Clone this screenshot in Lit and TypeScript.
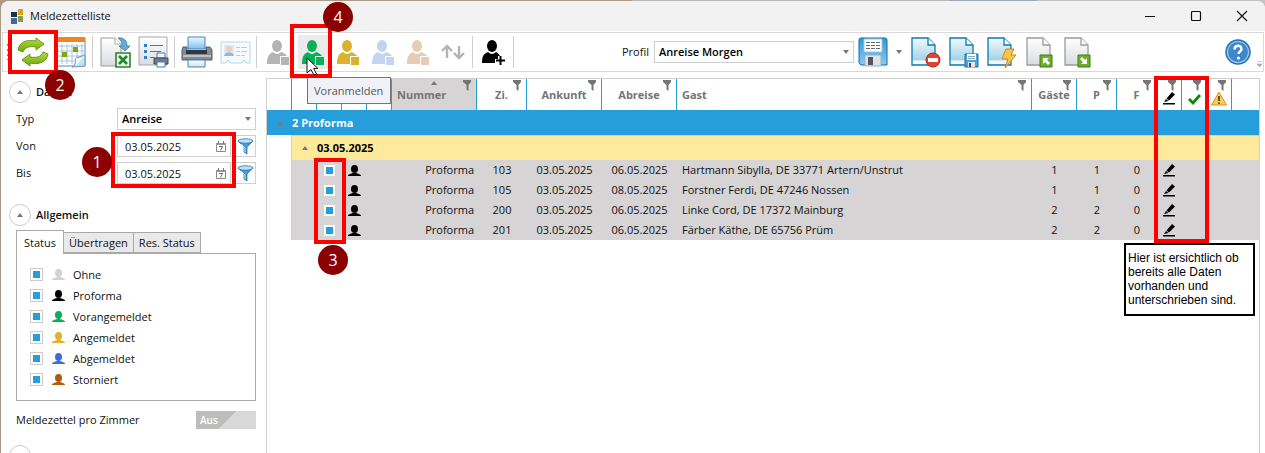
import { LitElement, html, css, svg, nothing } from "lit";
import { customElement, property, state } from "lit/decorators.js";
import { classMap } from "lit/directives/class-map.js";

const shapes: Record<string, unknown> = {
  logo: svg`<path d="M0 3h6v5H0z" fill="#17324f"/><path d="M7 0h5v6H7z" fill="#dca21c"/><path d="M0 9h6v6H0z" fill="#45698c"/><path d="M7 7h5v6H7z" fill="#8a9b4e"/>`,
  min: svg`<path d="M1 6.500h10" stroke="#111"/>`,
  max: svg`<rect x="1.500" y="1.500" width="9" height="9" rx="1" fill="none" stroke="#111" stroke-width="1.200"/>`,
  close: svg`<path d="M1 1l10 10M11 1L1 11" stroke="#111" stroke-width="1.200"/>`,
  refresh: svg`<g fill="url(#grn)" stroke="#4b8a0c" stroke-width=".8" stroke-linejoin="round"><path d="M1 13C2 5 10 2 19 4V1l8 6-8 6v-3c-7-1-11 0-13 5z"/><path d="M31 17c-1 8-9 11-18 9v3l-8-6 8-6v3c7 1 11 0 13-5z"/></g>`,
  calendar: svg`<path d="M1 2h28v28H1z" fill="#fff" stroke="#5e88b4"/><path d="M0 1h29v5H0z" fill="#f08322"/><path d="M2 10h26M2 15h26M2 20h26M2 25h20M6 8v20M11 8v20M16 8v20M21 8v20M26 8v14" stroke="#aec3da"/><path d="M6 16h5v5H6zM17 11h5v5h-5z" fill="#79a710"/><path d="M16 31c4-2 3-6 4-9l9-3v11z" fill="#c6e0f4" stroke="#6a99c4"/><path d="M20 22c3 1 6 0 9-3l-9 11z" fill="#f5fbff"/>`,
  excel: svg`<path d="M1 1h14l6 6v22H1z" fill="url(#paper)" stroke="#999"/><path d="M15 1v6h6" fill="#fff" stroke="#aaa"/><path d="M18 1c6-1 9 3 9 8h3l-5 5-6-5h3c0-4-1-6-4-8z" fill="#68a9dc" stroke="#2c6da4" stroke-width=".7"/><path d="M16 16h14v14H16z" fill="#e9f5e6" stroke="#2f8132" stroke-width="1.600"/><path d="M19 19l8 8M27 19l-8 8" stroke="#23862b" stroke-width="2.600"/>`,
  listprint: svg`<path d="M1 1h28v28H1z" fill="url(#paper)" stroke="#a6a6a6"/><path d="M6 8h3v3H6zM6 14h3v3H6zM6 20h3v3H6z" fill="#2f7fd0"/><path d="M12 9.500h13M12 15.500h11M12 21.500h4" stroke="#707070"/><path d="M19 17h8v5h-8z" fill="#eef7ff" stroke="#3e7ebc"/><path d="M16 22h14v6H16z" fill="#747b83" stroke="#41474d"/><path d="M19 26h8v5h-8z" fill="#fff" stroke="#3e7ebc"/>`,
  printer: svg`<path d="M7 1h17v12H7z" fill="url(#blue)" stroke="#4187c3"/><path d="M2 11h4v5h19v-5h4l2 3v10H1V14z" fill="#858b92" stroke="#545a61"/><path d="M5 14h21v4H5z" fill="#33383e"/><path d="M2 20h28" stroke="#bcc1c6" stroke-width="2"/><path d="M7 24h17v7H7z" fill="url(#paper)" stroke="#4187c3"/>`,
  idcard: svg`<g opacity=".5"><path d="M1 4h29v21h-4l-2-3-2 3H10l-2-3-2 3H1z" fill="#edf7fc" stroke="#69b4d9"/><path d="M4 7h10v11H4z" fill="#b7d7f0"/><circle cx="9" cy="11" r="3" fill="#dda05a"/><path d="M4 18c1-5 9-5 10 0z" fill="#2e72b5"/><path d="M16 9.500h4M21 9.500h6M16 13.500h4M21 13.500h6M16 17.500h4M21 17.500h4" stroke="#6ba4c8"/></g>`,
  person: svg`<ellipse cx="10" cy="6" rx="5" ry="6" fill="currentColor"/><path d="M0 24c0-8 2-10 6-12q4 4 8 0c3 1 5 2 6 4h-7v8z" fill="currentColor"/><path d="M14 17h8v8h-8z" fill="currentColor"/>`,
  personadd: svg`<ellipse cx="10" cy="6" rx="5" ry="6" fill="currentColor"/><path d="M0 23c0-8 2-9 6-11q4 4 8 0c2 1 3 2 4 4h-2v3h-3v4z" fill="currentColor"/><path d="M14 20.500h9M18.500 16v9" stroke="currentColor" stroke-width="2"/>`,
  updown: svg`<path d="M6 14V3M1 7l5-5 5 5M18 2v11M13 9l5 5 5-5" fill="none" stroke="#b4b4b4" stroke-width="2.400"/>`,
  save: svg`<path d="M1 3q0-2 2-2h24q2 0 2 2v25H3l-2-2z" fill="url(#disk)" stroke="#0b6fac"/><path d="M6 2h18v13H6z" fill="#fff" stroke="#9ec9e4"/><path d="M8 5.500h14M8 8.500h14M8 11.500h14" stroke="#5f6d7b" stroke-dasharray="4 1"/><path d="M7 18h16v11H7z" fill="#dce3ea" stroke="#8fb4ce"/><path d="M10 20h5v8h-5z" fill="#555"/>`,
  docdel: svg`${docShape("#0c78b0", "url(#doc)")}<circle cx="22" cy="23" r="7" fill="#e0442f" stroke="#b32416"/><path d="M17 21h10v4H17z" fill="#fff"/>`,
  docsave: svg`${docShape("#0c78b0", "url(#doc)")}<path d="M16 17h13v13H16z" fill="#4ba3dc" stroke="#176ea9"/><path d="M18 17h9v6h-9z" fill="#fff"/><path d="M19 19.500h7M19 21.500h7" stroke="#8ab"/><path d="M19 25h7v5h-7z" fill="#dfe7ee"/><path d="M20 26h2v4h-2z" fill="#444"/>`,
  docflash: svg`${docShape("#0c78b0", "url(#doc)")}<path d="M19 12h8l-3 6h5L18 31l3-9h-6z" fill="#fbc545" stroke="#cf821c"/>`,
  docup: svg`${docShape("#9b9b9b", "url(#paper)")}<path d="M14 18h12v12H14z" fill="#6fae2c" stroke="#3f7d13"/><path d="M17 21h6l-2 2 3 3-2 2-3-3-2 2z" fill="#fff"/>`,
  docdown: svg`${docShape("#9b9b9b", "url(#paper)")}<path d="M14 18h12v12H14z" fill="#6fae2c" stroke="#3f7d13"/><path d="M23 27h-6l2-2-3-3 2-2 3 3 2-2z" fill="#fff"/>`,
  help: svg`<circle cx="13" cy="13" r="12" fill="url(#disk)" stroke="#2f6fb4" stroke-width="1.500"/><circle cx="13" cy="13" r="10.500" fill="#3f87cd" stroke="#a9cdf0"/><path d="M9.500 10.500c0-5 7-5 7-.5 0 2.500-3 2.500-3 5" fill="none" stroke="#fff" stroke-width="2.400"/><circle cx="13.500" cy="19" r="1.600" fill="#fff"/>`,
  bust: svg`<ellipse cx="6.500" cy="4" rx="3.500" ry="4" fill="currentColor"/><path d="M0 11c0-2 3-2 5-3h3c2 1 5 1 5 3z" fill="currentColor"/>`,
  filter: svg`<path d="M0 0h8v2L5.500 5v6l-2-1.500V5L0 2z" fill="#757575"/>`,
  funnel: svg`<path d="M1 3l6 6v5l3 2V9l6-6z" fill="#4a9ad6" stroke="#2871ad" stroke-width=".8"/><ellipse cx="8.500" cy="3" rx="7.500" ry="2.200" fill="#bfe2f7" stroke="#2871ad" stroke-width=".8"/><path d="M4 6l4 4v4" fill="none" stroke="#bfe2f7"/>`,
  day: svg`<path d="M.5 2.500h9v8h-9z" fill="#fff" stroke="#888"/><path d="M0 2h10v2H0z" fill="#999"/><path d="M2.500 0v3M7.500 0v3" stroke="#777"/><path d="M3 5.500h3.500l-2 4" fill="none" stroke="#666"/>`,
  pen: svg`<path d="M0 11h12v1.600H0z" fill="#000"/><path d="M9 0l3 2.500-6 6L3.500 6.500zM3 7l2.500 2L1 10z" fill="#000"/>`,
  check: svg`<path d="M1 6l4 4 7-8" fill="none" stroke="#0a8a0a" stroke-width="2.800"/>`,
  warn: svg`<path d="M8 1l7.500 13H.5z" fill="#fccb57" stroke="#d99325" stroke-linejoin="round"/><path d="M8 5v5M8 11.500v1.500" stroke="#333" stroke-width="1.600"/>`,
  up: svg`<path d="M3 0l3 4H0z" fill="currentColor"/>`,
  down: svg`<path d="M0 0h6L3 4z" fill="#777"/>`,
  overflow: svg`<path d="M0 .5h5M0 3h5L2.500 6z" fill="#aaa" stroke="#aaa" stroke-width=".6"/>`,
  cursor: svg`<path d="M1 1v15l4-3.500L8 18l2.500-1-2.800-5.500H12z" fill="#fff" stroke="#111"/>`,
};

function docShape(line: string, fill: string) {
  return svg`<path d="M1 1h16l7 7v20H1z" fill=${fill} stroke=${line} stroke-width="1.300"/><path d="M17 1v7h7" fill="#fff" stroke=${line} stroke-width="1.300"/>`;
}

const gradients = svg`<defs>
  <linearGradient id="grn" x2="0" y2="1"><stop stop-color="#bddc37"/><stop offset="1" stop-color="#6da714"/></linearGradient>
  <linearGradient id="paper" x2="0" y2="1"><stop stop-color="#fff"/><stop offset="1" stop-color="#d9dcdf"/></linearGradient>
  <linearGradient id="blue" x2="0" y2="1"><stop stop-color="#eef8ff"/><stop offset="1" stop-color="#7fbfec"/></linearGradient>
  <linearGradient id="doc" x2="0" y2="1"><stop stop-color="#f3fafd"/><stop offset=".8" stop-color="#a5d3e6"/><stop offset=".85" stop-color="#f0f6fa"/></linearGradient>
  <linearGradient id="disk" x2="0" y2="1"><stop stop-color="#2e9ada"/><stop offset="1" stop-color="#8cc8ee"/></linearGradient>
</defs>`;

function icon(name: string, w: number, h: number) {
  return html`<svg width=${w} height=${h} viewBox="0 0 ${w} ${h}" aria-hidden="true">${gradients}${shapes[name]}</svg>`;
}

@customElement("tool-button")
export class ToolButton extends LitElement {
  @property() icon = "";
  @property() label = "";
  @property({ type: Number }) w = 32;
  @property({ type: Number }) h = 32;
  @property({ type: Boolean, reflect: true }) active = false;

  static styles = css`
    :host { display: flex; flex: none; width: 38px; height: 34px; justify-content: center; }
    button {
      display: flex; align-items: center; justify-content: center;
      width: 100%; padding: 0; border: 0; background: none; color: inherit;
    }
    :host([active]) button { background: #ebebeb; width: 30px; }
    svg { display: block; flex: none; }
  `;

  render() {
    return html`<button aria-label=${this.label}>${icon(this.icon, this.w, this.h)}</button>`;
  }
}

interface Guest { room: string; from: string; to: string; name: string; guests: number; p: number; f: number; }

@customElement("app-root")
export class AppRoot extends LitElement {
  @state() private guests: Guest[] = [
    { room: "103", from: "03.05.2025", to: "06.05.2025", name: "Hartmann Sibylla, DE 33771 Artern/Unstrut", guests: 1, p: 1, f: 0 },
    { room: "105", from: "03.05.2025", to: "08.05.2025", name: "Forstner Ferdi, DE 47246 Nossen", guests: 1, p: 1, f: 0 },
    { room: "200", from: "03.05.2025", to: "06.05.2025", name: "Linke Cord, DE 17372 Mainburg", guests: 2, p: 2, f: 0 },
    { room: "201", from: "03.05.2025", to: "06.05.2025", name: "Färber Käthe, DE 65756 Prüm", guests: 2, p: 2, f: 0 },
  ];

  private statuses = [
    ["Ohne", "none"], ["Proforma", "proforma"], ["Vorangemeldet", "pre"],
    ["Angemeldet", "in"], ["Abgemeldet", "out"], ["Storniert", "cancelled"],
  ];

  static styles = css`
    :host {
      display: block; height: 100vh; overflow: hidden; position: relative;
      box-sizing: border-box; padding: 1px 0 0 1px;
      background: linear-gradient(90deg, #a89a83 0 50%, #b9b9bb 50% 75%, #a0a8ba 75% 82%, #c4c4c4 82%);
      font: 11px/16px "Open Sans", "Noto Sans", sans-serif; color: #111;
    }
    *, *::before, *::after { box-sizing: border-box; }
    button, input, select { font: inherit; color: inherit; margin: 0; border-radius: 0; }
    button { padding: 0; border: 0; background: none; }
    svg { display: block; flex: none; }
    .window { height: 100%; display: flex; flex-direction: column; background: #fff; border-radius: 8px 8px 0 0; overflow: hidden; }
    .title { flex: none; height: 30px; display: flex; align-items: center; background: #f2f2f2; padding: 0 7px 0 10px; gap: 7px; }
    .title h1 { margin: 0; font: inherit; flex: 1; }
    .title button { width: 32px; height: 28px; margin-left: 7px; display: flex; align-items: center; justify-content: center; }

    .toolbar { flex: none; height: 40px; margin: 1px 1px 0; border: 1px solid #d9d9d9; display: flex; align-items: center; padding-left: 4px; }
    .grip { width: 2px; height: 16px; margin-right: 5px; background: repeating-linear-gradient(#888 0 2px, transparent 2px 5px); }
    .sep { flex: none; width: 1px; height: 32px; margin: 0 3px 0 2px; background: #cfcfcf; }
    .status { width: 35px; }
    .idle { color: #b4b4b4; } .pale-blue { color: #c5d3f3; } .pale-tan { color: #e6ccb5; }
    .gap-left { flex: 105; }
    .gap-right { flex: 122; }
    .toolbar label { margin-right: 5px; }
    .box { border: 1px solid #cfcfcf; background: #fff; display: flex; align-items: center; height: 22px; position: relative; }
    .box svg { pointer-events: none; }
    .box select { appearance: none; flex: 1; min-width: 0; height: 100%; border: 0; background: none; padding: 0 4px; font-weight: 600; color: #000; }
    .box .arrow { position: absolute; right: 4px; }
    .profile { width: 200px; }
    .more { width: 15px; height: 30px; display: flex; align-items: center; justify-content: center; }
    .overflow { align-self: flex-end; margin: 0 1px 3px 0; }

    .body { flex: 1; min-height: 0; display: flex; }
    aside { flex: none; width: 265px; padding: 9px 10px 0 8px; }
    .section { display: flex; align-items: center; gap: 5px; height: 22px; }
    .section h2 { margin: 0; font: inherit; font-weight: 600; }
    .round { width: 22px; height: 22px; border: 1px solid #ccc; border-radius: 50%; display: flex; align-items: center; justify-content: center; color: #777; }
    .fields { display: grid; grid-template-columns: 101px minmax(0, 1fr); row-gap: 5px; align-items: center; margin: 5px 0 20px 7px; }
    .date { display: flex; gap: 3px; min-width: 0; }
    .date .box { flex: 1; min-width: 0; }
    .date input { flex: 1; min-width: 0; border: 0; background: none; padding: 0 0 0 7px; height: 20px; }
    .date .box button { margin-right: 4px; }
    .date .funnel { flex: none; width: 22px; justify-content: center; }
    .tabs { display: flex; align-items: flex-end; margin: 4px 0 0 7px; height: 24px; position: relative; }
    .tabs button { height: 21px; padding: 0 5px; background: #e9e9e9; border: 1px solid #a9a9a9; border-left: 0; margin-bottom: 1px; }
    .tabs .current { height: 24px; padding: 0 7px; background: #fff; border-left: 1px solid #a9a9a9; border-bottom: 0; margin-bottom: 0; }
    .panel { margin: -1px 0 0 7px; border: 1px solid #a9a9a9; height: 148px; padding: 10px 13px; }
    .panel label { display: flex; align-items: center; height: 21px; }
    .tick { appearance: none; flex: none; width: 13px; height: 13px; padding: 2px; border: 1px solid #ccc; background: #fff; }
    .tick:checked { background: linear-gradient(#259edb, #259edb) content-box, #fff; }
    .panel svg { margin: 0 8px 0 9px; }
    .none { color: #d2d2d2; } .proforma { color: #000; } .pre { color: #0aae5b; }
    .in { color: #dcb22c; } .out { color: #3a6fdb; } .cancelled { color: #b35a07; }
    .option { display: flex; align-items: center; justify-content: space-between; margin: 9px 0 15px 7px; height: 20px; }
    .switch { width: 60px; height: 18px; padding-left: 4px; text-align: left; color: #fff; font-weight: 600; font-size: 10px; background: linear-gradient(135deg, #bdbdbd 52%, #d8d8d8 52%); }

    main { flex: 1; min-width: 0; margin: 6px 5px 0 0; border: 1px solid #d0d0d0; border-bottom: 0; }
    table { width: 100%; border-collapse: separate; border-spacing: 0; table-layout: fixed; }
    th, td { padding: 0; overflow: hidden; white-space: nowrap; }
    th { height: 30px; border-right: 1px solid #259edb; color: #757575; font-weight: 700; position: relative; }
    th:last-child { border-right: 0; }
    th.left, td.left { text-align: left; padding-left: 5px; }
    th.sorted { background: #d6d4d5; }
    th .filter { position: absolute; top: 1px; right: 5px; }
    th .sort { position: absolute; top: 2px; left: 39px; }
    th .mark { display: inline-block; margin-top: 12px; }
    .c25 { width: 25px; } .c27 { width: 27px; } .c40 { width: 40px; } .c45 { width: 45px; }
    .c50 { width: 50px; } .c75 { width: 75px; } .c85 { width: 85px; }
    .group td { height: 25px; background: #259edb; color: #fff; font-weight: 700; }
    .group .up, .day .up { color: #777; }
    .up svg { margin: auto; }
    .day td { height: 25px; background: #ffea9b; color: #000; font-weight: 700; border-top: 1px solid #d0d0d0; }
    td.indent, .day td.indent { background: #fff; border-top: 0; border-right: 1px solid #d0d0d0; }
    .guest td { height: 20px; background: #d6d4d5; text-align: center; }
    .guest td.indent { background: #fff; }
    .guest td.left { text-align: left; }
    .guest td.right { text-align: right; padding-right: 3px; }
    .guest .tick { display: block; width: 11px; height: 11px; padding: 0; border: 2px solid #fff; margin: auto; }
    .guest td svg { margin: auto; }

    .tip { position: absolute; left: 307px; top: 77px; height: 27px; padding: 5px 7px 5px 6px; border: 1px solid #767676; background: #f1f2f7; color: #575757; }
    .pointer { position: absolute; left: 306px; top: 57px; }
    .frame { position: absolute; border: 4px solid #f00; }
    .f1 { left: 111px; top: 132px; width: 125px; height: 56px; }
    .f2 { left: 8px; top: 30px; width: 50px; height: 44px; }
    .f3 { left: 314px; top: 158px; width: 32px; height: 86px; }
    .f4 { left: 290px; top: 24px; width: 42px; height: 54px; }
    .f5 { left: 1154px; top: 76px; width: 55px; height: 167px; }
    .num { position: absolute; width: 30px; height: 30px; border-radius: 50%; background: #8b0000; color: #fff; display: flex; align-items: center; justify-content: center; font-size: 16px; }
    .n1 { left: 82px; top: 147px; } .n2 { left: 45px; top: 70px; }
    .n3 { left: 318px; top: 245px; } .n4 { left: 323px; top: 2px; }
    .note { position: absolute; left: 1124px; top: 243px; width: 131px; height: 73px; border: 2px solid #000; background: #fff; margin: 0; padding: 6px 0 0 2px; color: #000; font: 12px/14px "Liberation Sans", Arial, sans-serif; white-space: nowrap; }
  `;

  private head(label: unknown, cls: string, filter = true, name = "") {
    return html`<th class=${cls} aria-label=${name || nothing}>
      ${label}${filter ? html`<button class="filter" aria-label="Filter">${icon("filter", 8, 11)}</button>` : nothing}
    </th>`;
  }

  private dateRow(id: string, label: string) {
    return html`<label for=${id}>${label}</label>
      <div class="date">
        <div class="box">
          <input id=${id} type="text" value="03.05.2025" />
          <button aria-label="Kalender">${icon("day", 10, 11)}</button>
        </div>
        <button class="box funnel" aria-label="Filter">${icon("funnel", 17, 17)}</button>
      </div>`;
  }

  private tool(name: string, label: string, w: number, h: number, cls = "", active = false) {
    return html`<tool-button class=${cls} icon=${name} label=${label} .w=${w} .h=${h} ?active=${active}></tool-button>`;
  }

  private renderToolbar() {
    const sep = html`<span class="sep"></span>`;
    return html`<div class="toolbar" role="toolbar">
      <span class="grip"></span>
      ${this.tool("refresh", "Aktualisieren", 32, 30)}
      ${this.tool("calendar", "Kalender", 30, 32)}${sep}
      ${this.tool("excel", "Excel", 31, 31)}
      ${this.tool("listprint", "Liste drucken", 31, 32)}${sep}
      ${this.tool("printer", "Drucken", 32, 32)}
      ${this.tool("idcard", "Ausweis", 31, 29)}${sep}
      ${this.tool("person", "Ohne", 22, 25, "status idle")}
      ${this.tool("person", "Voranmelden", 22, 25, "status pre", true)}
      ${this.tool("person", "Anmelden", 22, 25, "status in")}
      ${this.tool("person", "Abmelden", 22, 25, "status pale-blue")}
      ${this.tool("person", "Stornieren", 22, 25, "status pale-tan")}
      ${this.tool("updown", "Tauschen", 24, 16, "status")}${sep}
      ${this.tool("personadd", "Gast hinzufügen", 23, 25, "status proforma")}${sep}
      <span class="gap-left"></span>
      <label for="profile">Profil</label>
      <div class="box profile">
        <select id="profile"><option>Anreise Morgen</option></select>
        <span class="arrow">${icon("down", 6, 4)}</span>
      </div>
      ${this.tool("save", "Speichern", 30, 30)}
      <button class="more" aria-label="Mehr">${icon("down", 6, 4)}</button>
      ${this.tool("docdel", "Profil löschen", 30, 31)}
      ${this.tool("docsave", "Profil speichern", 30, 31)}
      ${this.tool("docflash", "Profil anwenden", 30, 31)}
      ${this.tool("docup", "Profil exportieren", 27, 31)}
      ${this.tool("docdown", "Profil importieren", 27, 31)}
      <span class="gap-right"></span>
      ${this.tool("help", "Hilfe", 26, 26)}
      <span class="overflow">${icon("overflow", 5, 7)}</span>
    </div>`;
  }

  private renderSide() {
    return html`<aside>
      <div class="section"><button class="round" aria-label="Einklappen">${icon("up", 6, 4)}</button><h2>Datum</h2></div>
      <div class="fields">
        <label for="typ">Typ</label>
        <div class="box">
          <select id="typ"><option>Anreise</option></select>
          <span class="arrow">${icon("down", 6, 4)}</span>
        </div>
        ${this.dateRow("von", "Von")}${this.dateRow("bis", "Bis")}
      </div>
      <div class="section"><button class="round" aria-label="Einklappen">${icon("up", 6, 4)}</button><h2>Allgemein</h2></div>
      <div class="tabs" role="tablist">
        ${["Status", "Übertragen", "Res. Status"].map((t, i) => html`
          <button role="tab" aria-selected=${i === 0} class=${classMap({ current: i === 0 })}>${t}</button>`)}
      </div>
      <div class="panel">
        ${this.statuses.map(([name, cls]) => html`<label><input class="tick" type="checkbox" checked /><span class=${cls}>${icon("bust", 13, 11)}</span>${name}</label>`)}
      </div>
      <div class="option"><span id="per-room">Meldezettel pro Zimmer</span>
        <button class="switch" role="switch" aria-checked="false" aria-labelledby="per-room">Aus</button></div>
      <div class="section"><button class="round" aria-label="Einklappen">${icon("up", 6, 4)}</button></div>
    </aside>`;
  }

  private renderTable() {
    const mark = (n: string, w: number, h: number) => html`<span class="mark">${icon(n, w, h)}</span>`;
    return html`<main><table>
      <thead><tr>
        ${[0, 1, 2, 3, 4].map(() => this.head("", "c25", false))}
        ${this.head(html`Nummer<span class="sort">${icon("up", 6, 4)}</span>`, "c85 left sorted")}
        ${this.head("Zi.", "c50")}${this.head("Ankunft", "c75")}${this.head("Abreise", "c75")}
        ${this.head("Gast", "left")}${this.head("Gäste", "c45")}${this.head("P", "c40")}${this.head("F", "c40")}
        ${this.head(mark("pen", 13, 13), "c25", true, "Unterschrift")}
        ${this.head(mark("check", 13, 12), "c25", true, "Vollständig")}
        ${this.head(mark("warn", 16, 15), "c25", true, "Warnung")}
        ${this.head("", "c27", false)}
      </tr></thead>
      <tbody>
        <tr class="group"><td class="up">${icon("up", 6, 4)}</td><td colspan="16">2 Proforma</td></tr>
        <tr class="day"><td class="indent"></td><td class="up">${icon("up", 6, 4)}</td><td colspan="15">03.05.2025</td></tr>
        ${this.guests.map((g) => html`<tr class="guest">
          <td class="indent"></td><td></td>
          <td><input class="tick" type="checkbox" checked aria-label=${g.name} /></td>
          <td class="proforma">${icon("bust", 13, 11)}</td><td></td>
          <td class="right">Proforma</td><td>${g.room}</td><td>${g.from}</td><td>${g.to}</td>
          <td class="left">${g.name}</td><td>${g.guests}</td><td>${g.p}</td><td>${g.f}</td>
          <td>${icon("pen", 13, 13)}</td><td></td><td></td><td></td>
        </tr>`)}
      </tbody>
    </table></main>`;
  }

  render() {
    return html`
      <div class="window">
        <header class="title">
          ${icon("logo", 12, 15)}<h1>Meldezettelliste</h1>
          <button aria-label="Minimieren">${icon("min", 12, 12)}</button>
          <button aria-label="Maximieren">${icon("max", 12, 12)}</button>
          <button aria-label="Schließen">${icon("close", 12, 12)}</button>
        </header>
        ${this.renderToolbar()}
        <div class="body">${this.renderSide()}${this.renderTable()}</div>
      </div>
      <div class="tip" role="tooltip">Voranmelden</div>
      ${[1, 2, 3, 4, 5].map((n) => html`<span class="frame f${n}"></span>`)}
      ${[1, 2, 3, 4].map((n) => html`<span class="num n${n}">${n}</span>`)}
      <span class="pointer">${icon("cursor", 14, 20)}</span>
      <p class="note">Hier ist ersichtlich ob<br />bereits alle Daten<br />vorhanden und<br />unterschrieben sind.</p>`;
  }
}
